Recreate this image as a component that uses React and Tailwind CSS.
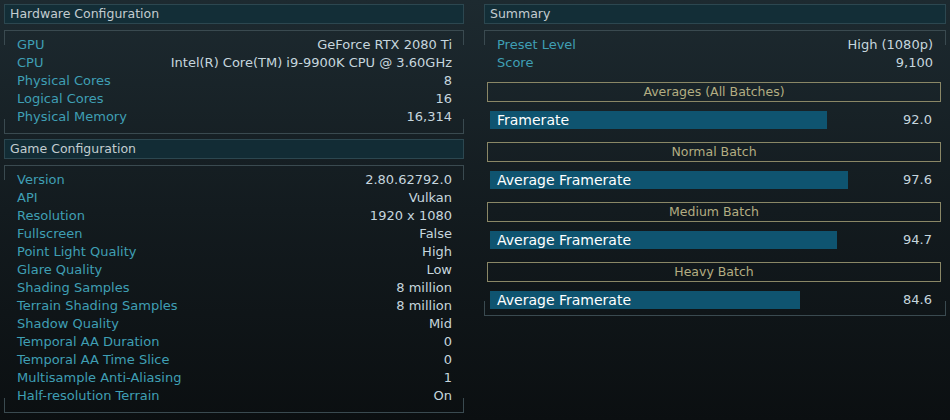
// Benchmark results screen - hardware / game config and summary
const hardware = [
  ['GPU', 'GeForce RTX 2080 Ti'],
  ['CPU', 'Intel(R) Core(TM) i9-9900K CPU @ 3.60GHz'],
  ['Physical Cores', '8'],
  ['Logical Cores', '16'],
  ['Physical Memory', '16,314'],
];

const game = [
  ['Version', '2.80.62792.0'],
  ['API', 'Vulkan'],
  ['Resolution', '1920 x 1080'],
  ['Fullscreen', 'False'],
  ['Point Light Quality', 'High'],
  ['Glare Quality', 'Low'],
  ['Shading Samples', '8 million'],
  ['Terrain Shading Samples', '8 million'],
  ['Shadow Quality', 'Mid'],
  ['Temporal AA Duration', '0'],
  ['Temporal AA Time Slice', '0'],
  ['Multisample Anti-Aliasing', '1'],
  ['Half-resolution Terrain', 'On'],
];

const batches = [
  { title: 'Averages (All Batches)', label: 'Framerate', value: 92.0 },
  { title: 'Normal Batch', label: 'Average Framerate', value: 97.6 },
  { title: 'Medium Batch', label: 'Average Framerate', value: 94.7 },
  { title: 'Heavy Batch', label: 'Average Framerate', value: 84.6 },
];

const SectionHeader = ({ title }) => (
  <div className="h-[20px] bg-[#12303a]/80 border border-[#2c4750] px-[5px] flex items-center text-[12.5px] text-[#c3ccd0]">
    {title}
  </div>
);

// Caja con bordes arriba/abajo y esquinas cortas a los lados
const Frame = ({ children, className = '' }) => (
  <div className={`relative border-y border-[#3a4a50] ${className}`}>
    <span className="absolute left-0 top-0 w-px h-[14px] bg-[#3a4a50]" />
    <span className="absolute right-0 top-0 w-px h-[14px] bg-[#3a4a50]" />
    <span className="absolute left-0 bottom-0 w-px h-[14px] bg-[#3a4a50]" />
    <span className="absolute right-0 bottom-0 w-px h-[14px] bg-[#3a4a50]" />
    {children}
  </div>
);

const Row = ({ label, value }) => (
  <div className="flex items-center justify-between h-[18px] text-[13px]">
    <span className="text-[#3f9fb4]">{label}</span>
    <span className="text-[#c6d6de]">{value}</span>
  </div>
);

export default function App() {
  return (
    <div
      className="w-[950px] h-[420px] overflow-hidden bg-gradient-to-b from-[#1d2a30] via-[#131b1f] to-[#0b0f11] flex gap-[20px] px-[4px] pt-[4px]"
      style={{ fontFamily: '"DejaVu Sans", "Liberation Sans", sans-serif' }}
    >
      {/* Columna izquierda */}
      <div className="w-[460px] flex flex-col">
        <SectionHeader title="Hardware Configuration" />
        <Frame className="mt-[6px] pl-[13px] pr-[12px] pt-[5px] pb-[7px] mb-[5px]">
          {hardware.map(([l, v]) => (
            <Row key={l} label={l} value={v} />
          ))}
        </Frame>
        <SectionHeader title="Game Configuration" />
        <Frame className="mt-[6px] pl-[13px] pr-[12px] pt-[5px] pb-[7px]">
          {game.map(([l, v]) => (
            <Row key={l} label={l} value={v} />
          ))}
        </Frame>
      </div>

      {/* Columna derecha */}
      <div className="w-[462px] flex flex-col">
        <SectionHeader title="Summary" />
        <Frame className="mt-[6px] pb-[6px]">
          <div className="pl-[13px] pr-[13px] pt-[5px]">
            {[['Preset Level', 'High (1080p)'], ['Score', '9,100']].map(([l, v]) => (
              <Row key={l} label={l} value={v} />
            ))}
          </div>
          <div className="flex flex-col gap-[13px] mt-[10px] pl-[3px] pr-[5px]">
            {batches.map((b) => (
              <div key={b.title} className="flex flex-col gap-[9px]">
                <div className="h-[20px] border border-[#8a8766] flex items-center justify-center text-[12.5px] text-[#b3ad82]">
                  {b.title}
                </div>
                <div className="flex items-center h-[18px] pl-[3px] pr-[9px]">
                  <div className="flex-1">
                    <div
                      className="h-[18px] bg-[#0f5470] flex items-center pl-[7px] text-[14px] font-medium text-white whitespace-nowrap"
                      style={{ width: `${b.value * 3.665}px` }}
                    >
                      {b.label}
                    </div>
                  </div>
                  <span className="text-[13px] text-[#c6d6de]">{b.value.toFixed(1)}</span>
                </div>
              </div>
            ))}
          </div>
        </Frame>
      </div>
    </div>
  );
}
